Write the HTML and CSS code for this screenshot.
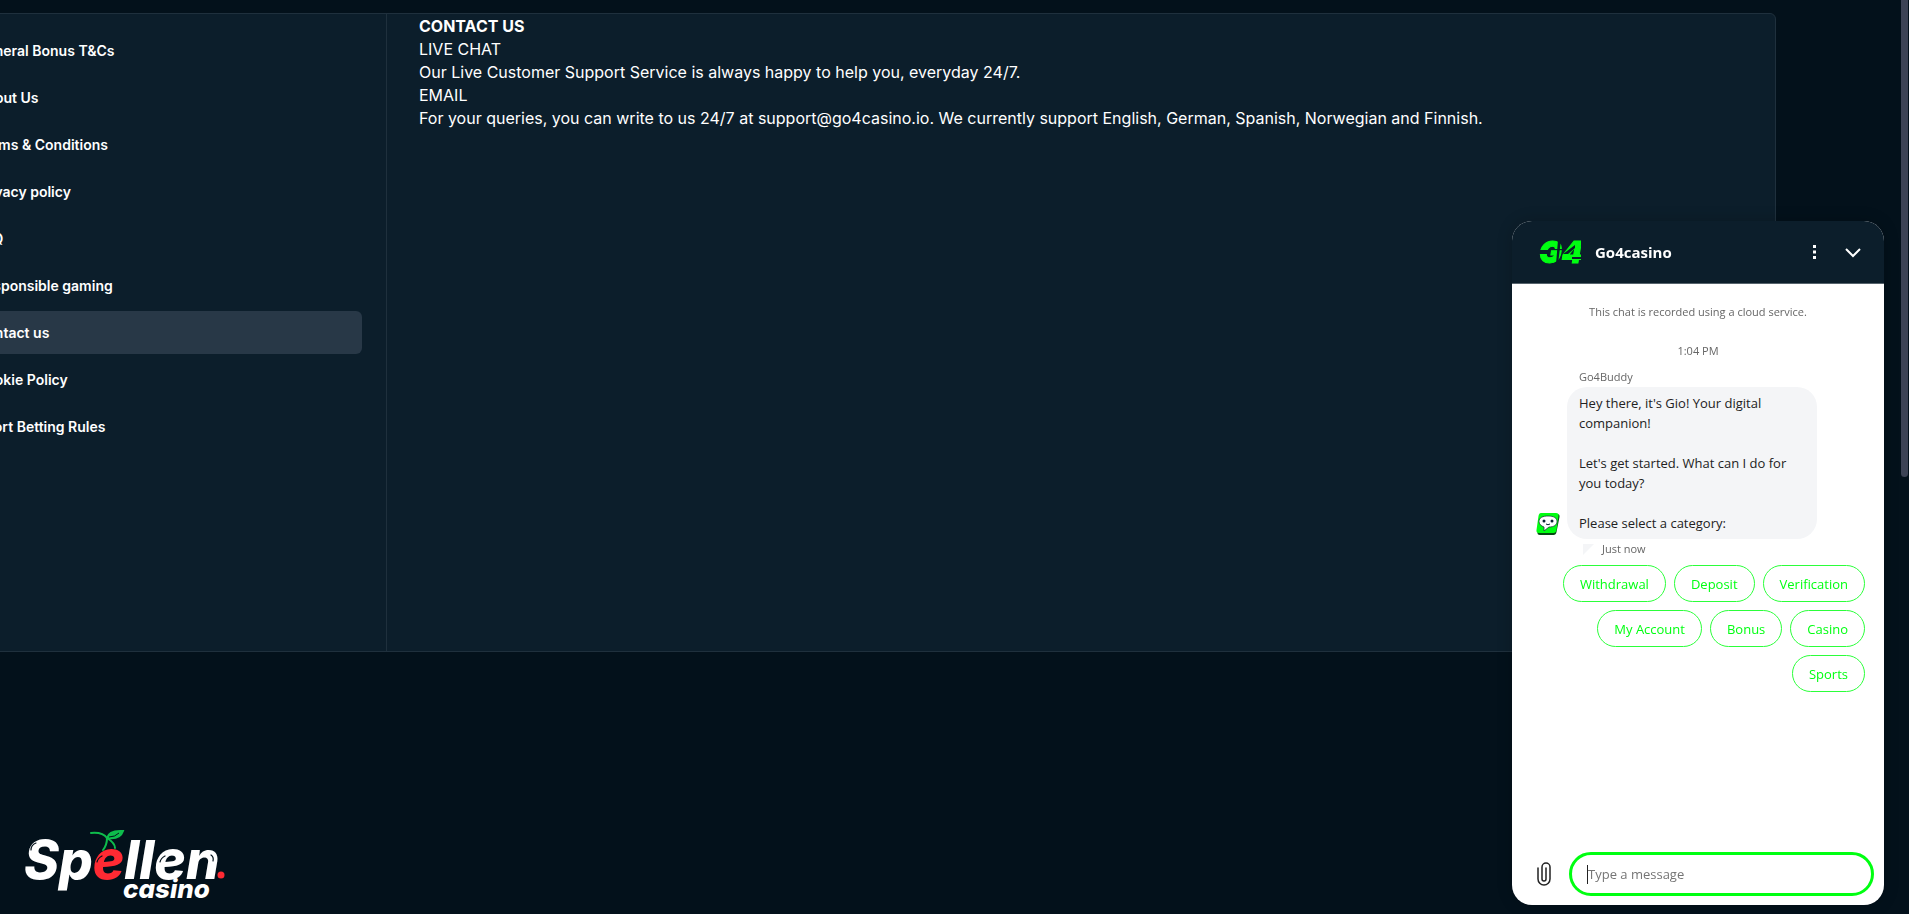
FILE: index.html
```html
<!DOCTYPE html>
<html lang="en">
<head>
<meta charset="utf-8">
<title>Contact us</title>
<link rel="stylesheet" href="styles.css">
</head>
<body>
<main class="page">
  <div class="panel">
    <nav class="sidebar" aria-label="Information pages">
      <a class="nav-item" href="#bonus">General Bonus T&amp;Cs</a>
      <a class="nav-item" href="#about">About Us</a>
      <a class="nav-item" href="#terms">Terms &amp; Conditions</a>
      <a class="nav-item" href="#privacy">Privacy policy</a>
      <a class="nav-item" href="#faq">FAQ</a>
      <a class="nav-item" href="#responsible">Responsible gaming</a>
      <a class="nav-item nav-item-active" href="#contact" aria-current="page">Contact us</a>
      <a class="nav-item" href="#cookies">Cookie Policy</a>
      <a class="nav-item" href="#sport">Sport Betting Rules</a>
    </nav>
    <article class="content">
      <h1>CONTACT US</h1>
      <p>LIVE CHAT</p>
      <p>Our Live Customer Support Service is always happy to help you, everyday 24/7.</p>
      <p>EMAIL</p>
      <p>For your queries, you can write to us 24/7 at support@go4casino.io. We currently support English, German, Spanish, Norwegian and Finnish.</p>
    </article>
  </div>
</main>

<a class="brand" href="#home" aria-label="Spellen casino">
  <svg width="208" height="80" viewBox="0 0 208 80">
    <text class="brand-main" x="0" y="55">Sp<tspan class="brand-red">e</tspan>llen</text>
    <text class="brand-sub" x="99" y="74">casino</text>
    <circle cx="197" cy="51" r="3.500" fill="#ff2a33"/>
    <g fill="none" stroke="#03111b" stroke-width="1.200" stroke-linecap="round">
      <path d="M7 26q0-5 5-7M73 38q1-4 5-6M136 38q1-4 5-6M187 31q3 2 2 6"/>
    </g>
    <g fill="none" stroke="#0ebc4c" stroke-width="2" stroke-linecap="round">
      <path d="M67 9q12-1 16 5q8 5 8 10M83 14q0 7-4 12"/>
      <path d="M83 14q2-8 16-7q-3 9-16 7z" fill="#0ebc4c"/>
    </g>
    <path d="M85 13q6 0 10-4" fill="none" stroke="#03111b"/>
  </svg>
</a>

<section class="chat" aria-label="Live chat">
  <header class="chat-head">
    <svg class="chat-logo" width="42" height="28" viewBox="0 0 42 28" aria-hidden="true">
      <text x="0" y="25">G4</text>
      <path d="M-2 12h11v4h-11zM24 16l12-9v3l-7 6zM33 21h10v-2h-10zM19 2h3l-3 24h-2z"/>
    </svg>
    <h2>Go4casino</h2>
    <button class="icon-button" type="button" aria-label="More options">
      <svg width="20" height="20" viewBox="0 0 20 20" fill="#fff"><path d="M8 3h3v3h-3zM8 8.500h3v3h-3zM8 14h3v3h-3z"/></svg>
    </button>
    <button class="icon-button" type="button" aria-label="Minimize chat">
      <svg width="20" height="20" viewBox="0 0 20 20" fill="none" stroke="#fff" stroke-width="2"><path d="M3 7l7 7 7-7"/></svg>
    </button>
  </header>
  <div class="chat-log">
    <p class="notice">This chat is recorded using a cloud service.</p>
    <p class="notice">1:04 PM</p>
    <div class="message">
      <p class="sender">Go4Buddy</p>
      <svg class="avatar" width="24" height="24" viewBox="0 0 24 24" aria-hidden="true">
        <path d="M6 2h15q3 0 2.500 3l-3 15q-.5 3-3 3H4q-3 0-2.500-3l3-15Q5 2 6 2z" fill="#064b12"/>
        <path d="M5 1h15q3 0 2.500 3l-2 14q-.5 3-3 3H3q-3 0-2.500-3l2-14Q3 1 5 1z" fill="#0f1"/>
        <path d="M12 4c6 0 9 2 9 5.500s-3 5.500-8 5.500l-5 4v-4c-3-1-5-3-5-5.500 0-4 4-5.500 9-5.500z" fill="#fff" stroke="#1d3b3b" stroke-width=".8"/>
        <circle cx="8" cy="9" r="1.500" fill="#0b2233"/><circle cx="16" cy="9" r="1.500" fill="#0b2233"/>
        <path d="M10 12q2 1.500 4 0" fill="none" stroke="#0b2233"/>
      </svg>
      <div class="bubble">Hey there, it's Gio! Your digital companion!<br><br>Let's get started. What can I do for you today?<br><br>Please select a category:</div>
      <p class="stamp"><svg width="11" height="11" viewBox="0 0 11 11" aria-hidden="true"><path d="M0 0h11L0 11z" fill="#f4f5f7"/></svg>Just now</p>
    </div>
    <div class="replies">
      <button type="button">Withdrawal</button>
      <button type="button">Deposit</button>
      <button type="button">Verification</button>
      <button type="button">My Account</button>
      <button type="button">Bonus</button>
      <button type="button">Casino</button>
      <button type="button">Sports</button>
    </div>
  </div>
  <form class="composer">
    <button class="icon-button" type="button" aria-label="Attach a file">
      <svg width="16" height="26" viewBox="0 0 16 26" fill="none" stroke="#222" stroke-width="1.500" stroke-linecap="round"><path d="M2 7v11a6 6 0 0 0 12 0V6a4 4 0 0 0-8 0v12a2 2 0 0 0 4 0V7"/></svg>
    </button>
    <div class="field">
      <input type="text" placeholder="Type a message" aria-label="Type a message">
      <span class="caret"></span>
    </div>
  </form>
</section>
<div class="scroll-thumb"></div>
</body>
</html>
```
FILE: styles.css
```css
* { box-sizing: border-box; }

body {
  margin: 0;
  min-height: 100vh;
  overflow: hidden;
  display: flex;
  flex-direction: column;
  justify-content: space-between;
  background: #03111b;
  color: #fff;
  font-family: Inter, "Liberation Sans", sans-serif;
}

h1, h2, p { margin: 0; }
button { font: inherit; cursor: pointer; }

.page { padding: 13px 133px 0 0; }

.panel {
  display: grid;
  grid-template-columns: 427px 1fr;
  min-height: 639px;
  margin-left: -41px;
  background: #0c1e2b;
  border: 1px solid #1f303d;
  border-radius: 6px;
}

.sidebar {
  display: flex;
  flex-direction: column;
  gap: 4px;
  padding: 15px 24px 15px 8px;
  border-right: 1px solid #1f303d;
}

.nav-item {
  padding: 0 8px;
  border-radius: 6px;
  color: #fff;
  font-size: 14px;
  font-weight: 600;
  line-height: 43px;
  text-decoration: none;
}
.nav-item-active { background: #283847; }

.content {
  padding: 1px 32px;
  font-size: 16px;
  line-height: 23px;
}
.content h1 { font-size: 16px; font-weight: 700; line-height: 23px; }

.brand { align-self: flex-start; margin: 0 0 10px 24px; }
.brand svg { display: block; }
.brand-main { fill: #fff; font: italic 800 53px Inter, sans-serif; }
.brand-sub { fill: #fff; font: italic 800 26px Inter, sans-serif; }
.brand-red { fill: #ff2a33; }

.chat {
  position: fixed;
  right: 25px;
  bottom: 9px;
  width: 372px;
  height: 684px;
  display: flex;
  flex-direction: column;
  overflow: hidden;
  border-radius: 20px;
  background: #fff;
  box-shadow: 0 0 16px rgba(0, 0, 0, 0.2);
  color: #222;
  font: 13px "Open Sans", "Noto Sans", sans-serif;
}

.chat-head {
  display: flex;
  align-items: center;
  gap: 18px;
  height: 63px;
  padding: 0 21px 0 27px;
  background: #0c1e2b;
  border-bottom: 1px solid #56636c;
  color: #fff;
}
.chat-head h2 { flex: 1; margin-left: -4px; font-size: 15px; font-weight: 700; }
.chat-logo text {
  fill: #0f1;
  stroke: #0f1;
  stroke-width: 1;
  font: italic 900 30px Inter, sans-serif;
}
.chat-logo path { fill: #0c1e2b; }

.icon-button {
  display: flex;
  padding: 0;
  border: 0;
  background: none;
}

.chat-log { flex: 1; padding: 17px 19px 0 24px; }
.notice {
  margin: 0 5px 18px 0;
  color: #666;
  font-size: 11px;
  line-height: 21px;
  text-align: center;
}

.message {
  display: grid;
  grid-template-columns: 24px 250px;
  column-gap: 7px;
  align-items: end;
}
.sender, .stamp {
  grid-column: 2;
  color: #666;
  font-size: 11px;
  line-height: 20px;
}
.sender { margin-top: -12px; padding: 0 12px; }
.stamp { display: flex; align-items: center; gap: 8px; padding-left: 16px; }
.avatar { grid-column: 1; margin-bottom: 3px; }
.bubble {
  grid-column: 2;
  padding: 6px 12px;
  border-radius: 20px;
  background: #f4f5f7;
  line-height: 20px;
}

.replies {
  display: flex;
  flex-wrap: wrap;
  justify-content: flex-end;
  gap: 8px;
  padding-top: 6px;
}
.replies button {
  height: 37px;
  padding: 0 16px;
  border: 1px solid #2bff3a;
  border-radius: 19px;
  background: #fff;
  color: #0f1;
}

.composer {
  display: flex;
  align-items: center;
  gap: 17px;
  padding: 0 10px 9px 24px;
}
.field { position: relative; flex: 1; }
.field input {
  display: block;
  width: 100%;
  height: 44px;
  padding: 0 16px;
  border: 3px solid #0f1;
  border-radius: 22px;
  outline: 0;
  background: #fff;
  color: #222;
  font: inherit;
}
.field input::placeholder { color: #757575; }
.caret {
  position: absolute;
  top: 13px;
  left: 18px;
  width: 1px;
  height: 19px;
  background: #222;
}

.scroll-thumb {
  position: fixed;
  top: 0;
  right: 1px;
  width: 7px;
  height: 477px;
  border-radius: 0 0 4px 4px;
  background: #3c4355;
}
```
